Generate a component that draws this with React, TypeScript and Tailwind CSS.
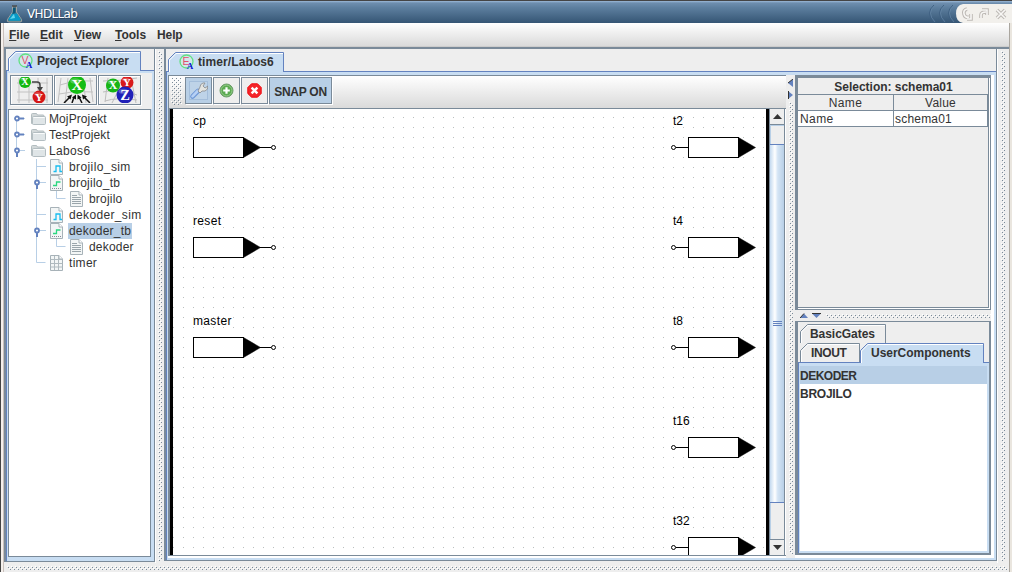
import React from "react";

const FONT = "'Liberation Sans', Arial, sans-serif";

function Bumps({ id, w, h }: { id: string; w: number; h: number }) {
  return (
    <svg width={w} height={h} shapeRendering="crispEdges" className="block shrink-0">
      <pattern id={id} width="4" height="4" patternUnits="userSpaceOnUse">
        <rect x="0" y="0" width="1" height="1" fill="#fff" />
        <rect x="2" y="2" width="1" height="1" fill="#fff" />
        <rect x="1" y="1" width="1" height="1" fill="#7a8a99" />
        <rect x="3" y="3" width="1" height="1" fill="#7a8a99" />
      </pattern>
      <rect width={w} height={h} fill={`url(#${id})`} />
    </svg>
  );
}

function Flask() {
  return (
    <svg width="18" height="18" viewBox="0 0 18 18">
      <path d="M6.500 1h4v6l5 7.500q1 2.500-1.500 2.500h-11q-2.500 0-1.500-2.500l5-7.500z" fill="#55717f" stroke="#b3b4ac" strokeWidth=".8" />
      <path d="M6 8.500h5l3.500 5.500q.5 1.800-1 1.800h-10q-1.500 0-1-1.800z" fill="#079ac7" />
      <path d="M7 3h2.500v5l-3 1z" fill="#0a5878" />
      <path d="M4 14l4-5 1 4z" fill="#62d8ef" />
      <path d="M6 1h5" stroke="#222" />
    </svg>
  );
}

function Badge({ letter }: { letter: string }) {
  return (
    <svg width="16" height="16" viewBox="0 0 16 16" className="shrink-0">
      <circle cx="7.500" cy="7.500" r="6.500" fill="#d3e6ea" stroke="#62e083" strokeWidth="1.300" />
      <text x="3.500" y="10.800" fontFamily={FONT} fontSize="10.500" fill="#e0526c">{letter}</text>
      <text x="7.800" y="14.500" fontFamily="'Liberation Serif', serif" fontWeight="bold" fontSize="9" fill="#0713d8">A</text>
    </svg>
  );
}

function Ball({ x, y, r, c, t }: { x: number; y: number; r: number; c: string; t: string }) {
  return (
    <g>
      <circle cx={x} cy={y} r={r} fill={c} />
      <ellipse cx={x - r * 0.2} cy={y - r * 0.45} rx={r * 0.55} ry={r * 0.3} fill="#fff" opacity=".25" />
      <text x={x} y={y + r * 0.56} textAnchor="middle" fontFamily="'Liberation Serif', serif" fontWeight="bold" fontSize={r * 1.7} fill="#fff">{t}</text>
    </g>
  );
}

function ToolButton({ kind }: { kind: number }) {
  return (
    <div className="flex h-[30px] w-[43px] items-center justify-center border border-[#7a8a99] bg-[#eee] shadow-[inset_1px_1px_0_#fff,1px_1px_0_#fff]">
      <svg width="39" height="26" viewBox="0 0 39 26" overflow="hidden">
        {kind === 0 && (
          <>
            <path d="M5 6H36M5 15H36M5 23H36M7 1V26M17 1V26M26 1V26M35 1V26" stroke="#c2c2c2" fill="none" />
            <path d="M20 5h5q3 0 3 3v4" stroke="#444" strokeWidth="1.500" fill="none" />
            <path d="M25 10h6l-3 5z" fill="#444" />
            <Ball x={13} y={5} r={6} c="#12b912" t="X" />
            <Ball x={27} y={20} r={6.5} c="#d51616" t="Y" />
          </>
        )}
        {kind === 1 && (
          <>
            <path d="M5 1L2 25M4 8q15-5 33-4M3 17q16-4 34-2M34 1l3 24M12 1L9 26M27 1l3 25" stroke="#c2c2c2" fill="none" />
            <path d="M8 26l6-6M16 26l2-6M26 26l-3-6M34 26l-6-6" stroke="#111" strokeWidth="1.500" />
            <path d="M16 17.500l-5 2 3.500 3zM20 17.500l-4 3 4 2zM21.500 17.500l0 5 4-2zM26 17.500l1 5 4-3z" fill="#111" />
            <Ball x={21} y={8} r={9} c="#15bd15" t="X" />
          </>
        )}
        {kind === 2 && (
          <>
            <path d="M3 4q16 0 34-3M3 15q16-4 34 3M5 24q12-4 32-1M8 1l-3 24M31 1l5 25M18 14l-6 12" stroke="#bdbdbd" fill="none" />
            <Ball x={13} y={8.5} r={7} c="#16b516" t="X" />
            <Ball x={27} y={5.5} r={6.5} c="#d91a1a" t="Y" />
            <Ball x={25} y={18} r={8.5} c="#2020b8" t="Z" />
          </>
        )}
      </svg>
    </div>
  );
}

function Folder() {
  return (
    <svg width="16" height="16" viewBox="0 0 16 16" className="shrink-0">
      <path d="M1.500 12.500v-9q0-1 1-1h4l1 1.500h5.500q1 0 1 1v8z" fill="#d3d9da" stroke="#b3bdc0" />
      <path d="M3.500 5.500h11q1 0 1 1v6q0 1-1 1h-11q-1 0-1-1v-6q0-1 1-1z" fill="#dfe5e7" stroke="#b3bdc1" />
      <path d="M3.500 6.500h11" stroke="#fafcfc" />
    </svg>
  );
}

function FileIcon({ kind }: { kind: string }) {
  return (
    <svg width="14" height="16" viewBox="0 0 14 16" className="shrink-0">
      <path d="M.5.500h8.500l3.500 3.500v11.500h-12z" fill="#f3f6f6" stroke="#a7b2b8" />
      <path d="M9 .5v3.500h3.500" fill="#fff" stroke="#a7b2b8" />
      {kind === "sim" && <path d="M3.500 12.500h2.500v-5.500h4v5.500h2" stroke="#18bdf0" strokeWidth="1.300" fill="none" />}
      {kind === "tb" && (
        <>
          <path d="M3 10.500h3.500v-3.500h4" stroke="#2bd780" strokeWidth="1.300" fill="none" />
          <path d="M2 13.500h9" stroke="#889" strokeDasharray="1 1" />
        </>
      )}
      {kind === "doc" && <path d="M2 4.500h5M2 6.500h9M2 8.500h9M2 10.500h9M2 12.500h9" stroke="#9aa5ab" />}
      {kind === "grid" && <path d="M.5 4.500h12M.5 8.500h12M.5 12h12M4.500 1v14M8.500 1v14" stroke="#b0babf" fill="none" />}
    </svg>
  );
}

const ROWS: { pad: string; kind: string; text: string; track: string; sel?: boolean }[] = [
  { pad: "pl-[21px]", kind: "folder", text: "MojProjekt", track: "tracking-[0.1px]" },
  { pad: "pl-[21px]", kind: "folder", text: "TestProjekt", track: "tracking-[0.15px]" },
  { pad: "pl-[21px]", kind: "folder", text: "Labos6", track: "tracking-[0.35px]" },
  { pad: "pl-[41px]", kind: "sim", text: "brojilo_sim", track: "tracking-[0.4px]" },
  { pad: "pl-[41px]", kind: "tb", text: "brojilo_tb", track: "tracking-[0.25px]" },
  { pad: "pl-[61px]", kind: "doc", text: "brojilo", track: "tracking-[0.2px]" },
  { pad: "pl-[41px]", kind: "sim", text: "dekoder_sim", track: "tracking-[0.35px]" },
  { pad: "pl-[41px]", kind: "tb", text: "dekoder_tb", track: "tracking-[0.2px]", sel: true },
  { pad: "pl-[61px]", kind: "doc", text: "dekoder", track: "tracking-[0.2px]" },
  { pad: "pl-[41px]", kind: "grid", text: "timer", track: "tracking-[0.3px]" },
];

function Tree() {
  const handle = (x: number, y: number, open: boolean) => (
    <g key={y}>
      <circle cx={x} cy={y} r="2" fill="#fff" stroke="#6382bf" strokeWidth="1.800" />
      <path d={open ? `M${x} ${y + 2.5}v4` : `M${x + 2.5} ${y}h4.500`} stroke="#6382bf" strokeWidth="2" />
    </g>
  );
  return (
    <div className="relative h-[448px] w-[143px] border border-[#7a8a99] bg-white pt-[1px]">
      <svg width="141" height="180" className="absolute left-0 top-0">
        <path d="M7.500 11v30M10 8.500h6M10 24.500h6M10 40.500h6M27.500 49v103.500h9M28 56.500h9M28 72.500h9M28 104.500h9M28 120.500h9M47.500 80v8.500h9M47.500 128v8.500h9" stroke="#b8cfe6" fill="none" />
        {handle(8, 8.5, false)}
        {handle(8, 24.5, false)}
        {handle(8, 40.5, true)}
        {handle(28, 72.5, true)}
        {handle(28, 120.5, true)}
      </svg>
      {ROWS.map((r) => (
        <div key={r.text} className={`relative flex h-4 items-center text-[12px] leading-4 text-[#333] ${r.pad}`}>
          {r.kind === "folder" ? <Folder /> : <FileIcon kind={r.kind} />}
          <span className={`h-4 whitespace-nowrap pr-[1px] ${r.kind === "folder" ? "ml-[3px]" : "ml-[4px] pl-[1px]"} ${r.track} ${r.sel ? "bg-[#b8cfe6]" : ""}`}>{r.text}</span>
        </div>
      ))}
    </div>
  );
}

function Tab({ w, h, active, children, className }: { w: number; h: number; active?: boolean; children: React.ReactNode; className: string }) {
  return (
    <div className={`grid shrink-0 ${className}`}>
      <svg width={w} height={h} className="col-start-1 row-start-1 block">
        <path d={`M.5 ${h}V7.500L7.500.5H${w - 0.5}V${h}`} fill={active ? "#c8ddf2" : "#eee"} stroke={active ? "#6382bf" : "#7a8a99"} />
        <path d={`M1.500 ${h}V8L8 1.500H${w - 1}`} fill="none" stroke="#fff" />
      </svg>
      <div className="relative col-start-1 row-start-1 flex items-center">{children}</div>
    </div>
  );
}

function Port({ x, y, name, out }: { x: number; y: number; name: string; out?: boolean }) {
  const bx = out ? x + 15 : x;
  return (
    <g stroke="#000">
      <text x={x} y={y - 12} stroke="none" fontFamily={FONT} fontSize="12" letterSpacing={out ? "0" : ".35"} fill="#000">{name}</text>
      <rect x={bx + 0.5} y={y + 0.5} width="50" height="20" fill="#fff" />
      <path d={`M${bx + 50.5} ${y + 0.5}l17 10-17 10z`} strokeWidth=".5" />
      {out ? (
        <>
          <circle cx={x + 0.5} cy={y + 10.5} r="2" fill="#fff" />
          <path d={`M${x + 3} ${y + 10.5}h12`} />
        </>
      ) : (
        <>
          <path d={`M${x + 67} ${y + 10.5}h11`} />
          <circle cx={x + 80.5} cy={y + 10.5} r="2" fill="#fff" />
        </>
      )}
    </g>
  );
}

function Canvas() {
  return (
    <svg width="599" height="446" viewBox="170 109 599 446" className="block shrink-0">
      <pattern id="grid" x="173" y="107" width="10" height="10" patternUnits="userSpaceOnUse">
        <rect width="1" height="1" fill="#b9bfbf" />
      </pattern>
      <rect x="170" y="109" width="599" height="446" fill="#fff" />
      <rect x="170" y="109" width="599" height="446" fill="url(#grid)" />
      <rect x="170" y="109" width="3" height="446" />
      <rect x="766" y="109" width="3" height="446" />
      <Port x={193} y={137} name="cp" />
      <Port x={193} y={237} name="reset" />
      <Port x={193} y={337} name="master" />
      <Port x={673} y={137} name="t2" out />
      <Port x={673} y={237} name="t4" out />
      <Port x={673} y={337} name="t8" out />
      <Port x={673} y={437} name="t16" out />
      <Port x={673} y={537} name="t32" out />
    </svg>
  );
}

function ScrollBar() {
  const btn = "flex h-4 shrink-0 items-center justify-center bg-[#eee]";
  return (
    <div className="flex h-[446px] w-4 flex-col border-x border-[#7a8a99] bg-[#eee]">
      <div className={`${btn} border-b border-[#7a8a99]`}>
        <svg width="9" height="5"><path d="M0 5L4.500 0 9 5z" fill="#333" /></svg>
      </div>
      <div className="h-[19px] border-l border-t border-[#b8cfe6]" />
      <div className="flex h-[359px] flex-col items-center justify-center gap-[1px] border-y border-[#6382bf] bg-[linear-gradient(90deg,#c4daf0,#fff_35%,#d5e5f5_55%,#b8cfe6)]">
        <div className="h-px w-[9px] bg-[#6382bf]" />
        <div className="h-px w-[9px] bg-[#6382bf]" />
        <div className="h-px w-[9px] bg-[#6382bf]" />
      </div>
      <div className="flex-1 border-l border-[#b8cfe6]" />
      <div className={`${btn} border-t border-[#7a8a99]`}>
        <svg width="9" height="5"><path d="M0 0L4.500 5 9 0z" fill="#333" /></svg>
      </div>
    </div>
  );
}

function EditorBar() {
  const b = "flex h-[27px] items-center justify-center border border-[#7a8a99] shadow-[1px_1px_0_#fff]";
  return (
    <div className="flex h-[34px] w-[618px] items-start border-b border-t border-[#7a8a99] bg-[linear-gradient(#fff,#dadada)] pl-[2px] pt-px">
      <Bumps id="bt" w={11} h={28} />
      <div className="ml-[3px] flex gap-px">
        <div className={`${b} w-[27px] bg-[#b8cfe6]`}>
          <svg width="19" height="19" viewBox="0 0 19 19">
            <rect x=".5" y=".5" width="18" height="18" fill="#bed3e8" stroke="#a4bedb" />
            <path d="M3.500 15.500L9 10" stroke="#6f98d6" strokeWidth="4.600" strokeLinecap="round" />
            <path d="M3.500 15.300L8.700 10" stroke="#b6d0f5" strokeWidth="2.600" strokeLinecap="round" />
            <path d="M9 10l2-4q0-3 3-4l2 0-2 3 2 2 3-2q0 4-3 5l-3 0-2 2z" fill="#e4e4e0" stroke="#85888a" strokeWidth=".8" />
          </svg>
        </div>
        <div className={`${b} w-[27px] bg-[#eee]`}>
          <svg width="15" height="15" viewBox="0 0 15 15">
            <circle cx="7.500" cy="7.500" r="6.500" fill="#5cab52" stroke="#6a9a68" />
            <circle cx="7.500" cy="7.500" r="5.400" fill="none" stroke="#9ed193" strokeWidth=".8" />
            <path d="M7.500 4.200v6.600M4.200 7.500h6.600" stroke="#fff" strokeWidth="2.200" />
          </svg>
        </div>
        <div className={`${b} w-[27px] bg-[#eee]`}>
          <svg width="15" height="15" viewBox="0 0 15 15">
            <path d="M4.500.8h6l3.700 3.700v6l-3.700 3.700h-6L.8 10.500v-6z" fill="#f4262a" stroke="#f00c12" />
            <path d="M4.600 4.600l5.800 5.800M10.400 4.600l-5.800 5.800" stroke="#fff" strokeWidth="2.400" />
          </svg>
        </div>
        <div className={`${b} w-[63px] bg-[#b8cfe6] pt-[2px] text-[12px] font-bold tracking-[-0.25px]`}>SNAP ON</div>
      </div>
    </div>
  );
}

function Properties() {
  const c = "border-b border-r border-[#7a8a99]";
  return (
    <div className="h-[235px] w-[196px] border-b border-l-[3px] border-r border-t-[3px] border-[#7a8a99] pr-px pb-px">
      <div className="flex h-[230px] flex-col border-b border-r border-[#7a8a99] bg-[#eee] pr-px">
        <div className="h-4 pl-[2px] pt-px text-center text-[12px] font-bold leading-4 tracking-[-0.02px]">Selection: schema01</div>
        <div className="grid w-[190px] grid-cols-[96px_94px] border-t border-[#7a8a99] text-[12px] leading-[15px]">
          <div className={`${c} h-4 bg-[#eee] pt-px text-center tracking-[0.4px]`}>Name</div>
          <div className={`${c} h-4 pt-px text-center tracking-[0.2px]`}>Value</div>
          <div className={`${c} h-4 bg-white pl-[2px] pt-px tracking-[0.4px]`}>Name</div>
          <div className={`${c} h-4 bg-white pl-px pt-px tracking-[0.2px]`}>schema01</div>
        </div>
      </div>
    </div>
  );
}

function Components() {
  return (
    <div className="flex h-[234px] w-[196px] flex-col border-b-2 border-l-[3px] border-r-2 border-t border-[#7a8a99] bg-[#eee] text-[12px] font-bold">
      <div className="h-[21px] pl-[2px] pt-[2px]">
        <Tab w={86} h={19} className="w-[86px]"><span className="pl-[10px] tracking-[-0.05px]">BasicGates</span></Tab>
      </div>
      <div className="flex h-[19px] items-start pl-[2px]">
        <Tab w={60} h={19} className="w-[60px]"><span className="pl-[11px] tracking-[-0.35px]">INOUT</span></Tab>
        <Tab w={124} h={20} active className="relative z-10 w-[124px]"><span className="pb-px pl-[11px] tracking-[-0.03px]">UserComponents</span></Tab>
      </div>
      <div className="flex flex-1 flex-col border-l border-t border-[#6382bf] bg-[#c8ddf2] pb-[2px] pl-px pr-[2px] pt-[3px] leading-[18px]">
        <div className="h-[18px] bg-[#b8cfe6] pt-px tracking-[-0.5px]">DEKODER</div>
        <div className="flex-1 bg-white pt-px tracking-[-0.25px]">BROJILO</div>
      </div>
    </div>
  );
}

function TitleBar() {
  return (
    <div className="flex h-[23px] w-full items-center border-t border-[#444] bg-[linear-gradient(#9bb9d7_0,#6e8eae_2px,#5d7f9f_30%,#355574)] pl-[6px]">
      <div className="flex flex-1 items-center pt-[3px]">
        <Flask />
        <span className="ml-[3px] font-['DejaVu_Sans'] text-[12px] tracking-[-0.65px] text-white [text-shadow:1px_1px_0_#2c4560]">VHDLLab</span>
      </div>
      <svg width="84" height="22" viewBox="928 1 84 22">
        <g fill="none" stroke="#3c5e80" strokeWidth=".9">
          <path d="M934 5q-9 8 0 17M944 5q-9 8 0 17M953 5q-9 8 0 17" />
        </g>
        <g fill="none" stroke="#6788a8" strokeWidth=".7">
          <path d="M935 5q-9 8 0 17M945 5q-9 8 0 17M954 5q-9 8 0 17" />
        </g>
        <path d="M1012 4H963q-7 1-7 9.500t7 9.500h49z" fill="#f2f0ec" />
        <g fill="none" stroke="#bdb9b5" strokeWidth="3.600">
          <path d="M967 9q-4 1-3 5t5 3M967 19h4v-5M981 18v-3q0-3 5-3M982 10h5v5M997 10l8 8M1005 10l-8 8" />
        </g>
        <g fill="none" stroke="#f8f7f5" strokeWidth="1.600">
          <path d="M967 9q-4 1-3 5t5 3M967 19h4v-5M981 18v-3q0-3 5-3M982 10h5v5M997 10l8 8M1005 10l-8 8" />
        </g>
      </svg>
    </div>
  );
}

export default function App() {
  return (
    <div className="flex h-[572px] w-[1012px] flex-col overflow-hidden bg-[#eee] font-['Liberation_Sans',Arial,sans-serif] text-[#333]">
      <TitleBar />
      <div className="flex h-[549px] border-l border-[#444]">
        <div className="w-[3px] shrink-0 border-r border-[#c9c0bc] bg-[#f5f0ec]" />
        <div className="flex w-[1005px] shrink-0 flex-col">
          <div className="flex h-6 items-center border-b border-[#ccc] bg-[linear-gradient(#fff,#dadada)] pl-[5px] text-[12px] font-bold">
            <span className="w-[31px]"><u>F</u>ile</span>
            <span className="w-[34px]"><u>E</u>dit</span>
            <span className="w-[41px]"><u>V</u>iew</span>
            <span className="w-[42px]"><u>T</u>ools</span>
            <span className="tracking-[-0.1px]">Help</span>
          </div>
          <div className="h-[2px] bg-[#7a8a99]" />
          <div className="flex h-[514px]">
            <div className="flex h-[513px] w-[151px] shrink-0 flex-col border-b border-l-2 border-r border-[#7a8a99]">
              <div className="flex h-[22px] items-end border-b border-[#6382bf] pl-[2px]">
                <Tab w={133} h={20} active className="-mb-px w-[133px]">
                  <div className="flex items-center pl-[10px]">
                    <Badge letter="V" />
                    <span className="ml-[3px] text-[12px] font-bold tracking-[-0.05px]">Project Explorer</span>
                  </div>
                </Tab>
              </div>
              <div className="flex flex-1 flex-col border-l border-[#6382bf] bg-[#c8ddf2] pl-px pr-[2px] pt-[2px]">
                <div className="flex h-[36px] gap-px bg-[#eee] pl-[2px] pt-[2px]">
                  <ToolButton kind={0} />
                  <ToolButton kind={1} />
                  <ToolButton kind={2} />
                </div>
                <Tree />
              </div>
            </div>
            <div className="flex w-[9px] shrink-0 justify-center border-l border-white pt-[2px]">
              <Bumps id="b1" w={4} h={510} />
            </div>
            <div className="flex h-[512px] w-[833px] shrink-0 flex-col border-b border-l-2 border-r border-[#7a8a99]">
              <div className="flex h-[23px] items-end border-b border-[#6382bf] pl-[2px]">
                <Tab w={116} h={20} active className="-mb-px w-[116px]">
                  <div className="flex items-center pl-[11px]">
                    <Badge letter="E" />
                    <span className="ml-[3px] text-[12px] font-bold tracking-[0.1px]">timer/Labos6</span>
                  </div>
                </Tab>
              </div>
              <div className="flex flex-1 flex-col border-l border-[#6382bf] bg-[#c8ddf2] pb-[2px] pl-px pr-[2px] pt-[3px]">
                <div className="flex flex-1 bg-white">
                  <div className="h-[481px] w-[618px] shrink-0 border-l border-[#7a8a99]">
                    <EditorBar />
                    <div className="flex h-[447px] border-b border-l border-[#7a8a99]">
                      <Canvas />
                      <ScrollBar />
                    </div>
                  </div>
                  <div className="flex w-[9px] shrink-0 flex-col items-center bg-[#eee] pt-[4px]">
                    <svg width="5" height="20" className="mb-[3px]">
                      <path d="M5 0v8L0 4z" fill="#6382bf" />
                      <path d="M5 0L0 4" stroke="#333" />
                      <path d="M0 12v8l5-4z" fill="#6382bf" />
                      <path d="M.5 12v8" stroke="#333" />
                    </svg>
                    <Bumps id="b2" w={4} h={452} />
                  </div>
                  <div className="flex w-[196px] flex-col">
                    <Properties />
                    <div className="flex h-[11px] items-center bg-[#eee] pl-[5px]">
                      <svg width="22" height="5" className="mr-[4px]">
                        <path d="M0 5l4-4.500L8 5z" fill="#6382bf" />
                        <path d="M0 5l4-4.500" stroke="#333" />
                        <path d="M12 .5h9L16.500 5z" fill="#6382bf" />
                        <path d="M12 .5h9" stroke="#333" />
                      </svg>
                      <Bumps id="b3" w={165} h={4} />
                    </div>
                    <Components />
                  </div>
                </div>
              </div>
            </div>
            <div className="flex w-[11px] shrink-0 border-l border-white pl-[3px] pt-[2px]">
              <Bumps id="b4" w={4} h={510} />
            </div>
          </div>
          <div className="flex h-[9px] items-center pl-[3px]">
            <Bumps id="b5" w={1000} h={4} />
          </div>
        </div>
        <div className="flex-1 border-l border-[#aaa69f] bg-[#eae6df]" />
      </div>
    </div>
  );
}
